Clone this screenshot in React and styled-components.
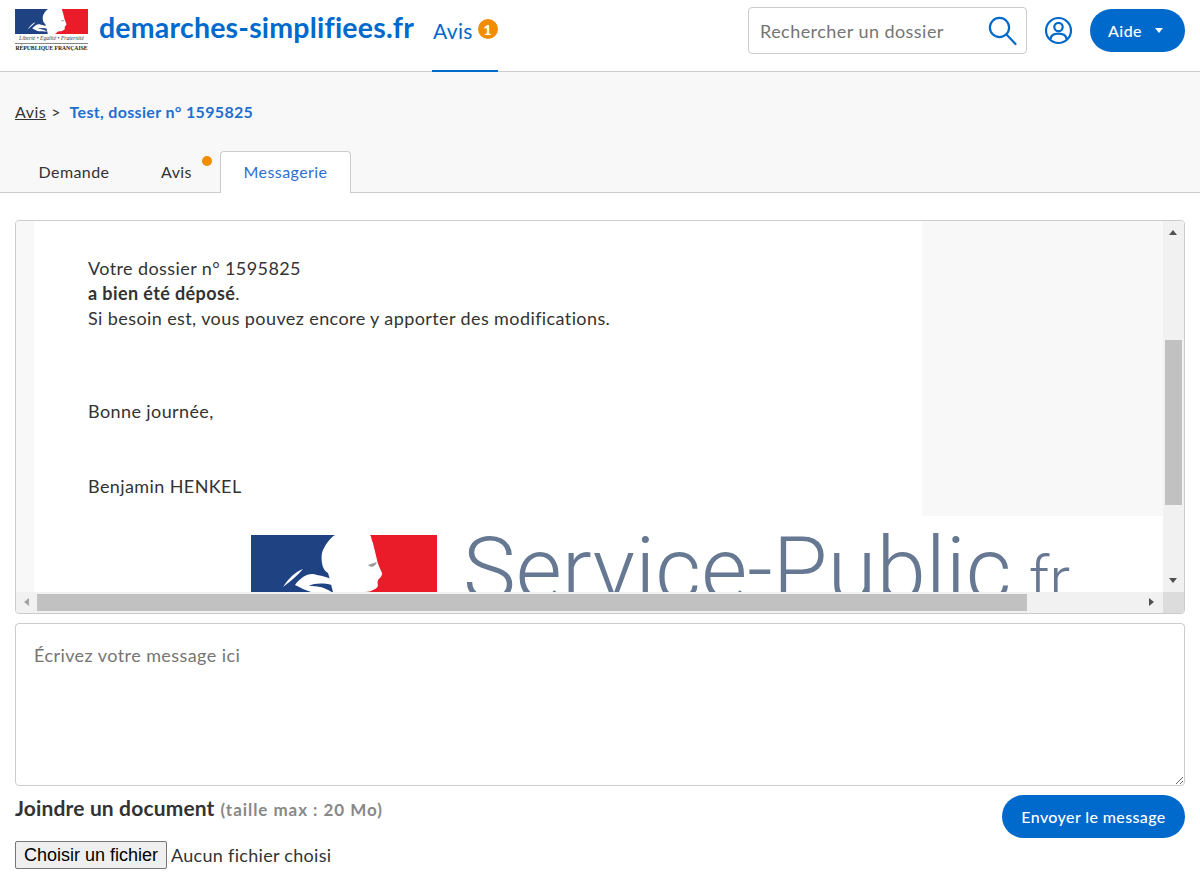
import React from "react";
import styled, { createGlobalStyle } from "styled-components";

const GlobalStyle = createGlobalStyle`
  html, body {
    margin: 0;
    padding: 0;
    background: #fff;
    font-family: "Lato", "Noto Sans", sans-serif;
    color: #333;
  }
  * {
    box-sizing: border-box;
  }
`;

const Header = styled.header`
  height: 72px;
  padding: 0 15px;
  display: flex;
  align-items: center;
  justify-content: space-between;
  border-bottom: 1px solid #ccc;
  background: #fff;
`;

const HeaderLeft = styled.div`
  display: flex;
  align-items: center;
  height: 100%;
`;

const HeaderRight = styled.div`
  display: flex;
  align-items: center;
  margin-top: -10px;
`;

const Logo = styled.div`
  width: 73px;
  margin-top: -10px;
  display: flex;
  flex-direction: column;
`;

const Devise = styled.div`
  font-family: "Liberation Serif", serif;
  font-style: italic;
  font-size: 5.6px;
  line-height: 8px;
  white-space: nowrap;
  text-align: center;
  color: #333;
  border-bottom: 1px solid #888;
  padding-bottom: 1px;
`;

const Republique = styled.div`
  font-family: "Liberation Serif", serif;
  font-weight: bold;
  font-size: 5.7px;
  line-height: 8px;
  white-space: nowrap;
  text-align: center;
  color: #222;
`;

const Title = styled.div`
  margin-left: 11px;
  margin-top: -18px;
  font-size: 28.5px;
  font-weight: 700;
  color: #0069cc;
  white-space: nowrap;
  letter-spacing: 0.2px;
`;

const NavItem = styled.div`
  margin-left: 18px;
  width: 66px;
  height: 100%;
  display: flex;
  align-items: center;
  gap: 5px;
  padding: 0 0 10px 1px;
  font-size: 21px;
  color: #0069cc;
  border-bottom: 2px solid #0069cc;
  margin-bottom: -1px;
  letter-spacing: 0.3px;
`;

const Badge = styled.span`
  width: 20px;
  height: 20px;
  border-radius: 50%;
  background: #f28c00;
  color: #fff;
  font-size: 14px;
  font-weight: 900;
  letter-spacing: 0;
  display: flex;
  align-items: center;
  justify-content: center;
  margin-top: -2px;
`;

const SearchBox = styled.div`
  width: 279px;
  height: 47px;
  border: 1px solid #ccc;
  border-radius: 4px;
  display: flex;
  align-items: center;
  justify-content: space-between;
  padding: 0 9px 0 11px;
  font-size: 18px;
  color: #757575;
  letter-spacing: 0.45px;
`;

const UserButton = styled.div`
  margin-left: 17px;
  width: 29px;
  height: 29px;
  display: flex;
`;

const PillButton = styled.div`
  height: 43px;
  border-radius: 22px;
  background: #0069cc;
  color: #fff;
  display: flex;
  align-items: center;
  justify-content: center;
  font-size: 16px;
  font-weight: 500;
  white-space: nowrap;
  letter-spacing: 0.4px;
`;

const AideButton = styled(PillButton)`
  width: 95px;
  margin-left: 17px;
  gap: 13px;
  padding-right: 4px;
`;

const Caret = styled.span`
  width: 0;
  height: 0;
  border-left: 4px solid transparent;
  border-right: 4px solid transparent;
  border-top: 5px solid #fff;
`;

const SubHeader = styled.section`
  height: 121px;
  background: #f8f8f8;
  border-bottom: 1px solid #ccc;
  padding: 0 15px;
  display: flex;
  flex-direction: column;
  justify-content: space-between;
`;

const Breadcrumb = styled.div`
  margin-top: 29px;
  display: flex;
  align-items: baseline;
  font-size: 16px;
  line-height: 22px;
`;

const CrumbLink = styled.span`
  text-decoration: underline;
  letter-spacing: 0.5px;
  color: #333;
`;

const CrumbSep = styled.span`
  margin: 0 9px 0 5px;
`;

const CrumbCurrent = styled.span`
  font-weight: 700;
  color: #1f6fd0;
  letter-spacing: 0.33px;
`;

const Tabs = styled.nav`
  display: flex;
  height: 42px;
  margin-bottom: -1px;
`;

const Tab = styled.div`
  position: relative;
  height: 42px;
  display: flex;
  align-items: center;
  justify-content: center;
  width: ${(p) => p.$width}px;
  font-size: 16px;
  letter-spacing: 0.42px;
  padding-bottom: 3px;
  color: ${(p) => (p.$active ? "#2d6fcf" : "#333")};
  background: ${(p) => (p.$active ? "#fff" : "transparent")};
  border: 1px solid ${(p) => (p.$active ? "#ccc" : "transparent")};
  border-bottom: 0;
  border-radius: 4px 4px 0 0;
`;

const TabDot = styled.span`
  position: absolute;
  top: 4px;
  right: 7px;
  width: 10px;
  height: 10px;
  border-radius: 50%;
  background: #f28c00;
`;

const Main = styled.main`
  padding: 27px 15px 0;
`;

const MailPanel = styled.div`
  height: 394px;
  border: 1px solid #ccc;
  border-radius: 4px;
  display: grid;
  grid-template-columns: 1fr 21px;
  grid-template-rows: 1fr 21px;
  overflow: hidden;
`;

const MailViewport = styled.div`
  display: flex;
  overflow: hidden;
  min-width: 0;
  min-height: 0;
  background: #f8f8f8;
`;

const MailGutter = styled.div`
  flex: none;
  width: 18px;
`;

const MailPage = styled.div`
  flex: 1;
  min-width: 0;
  display: flex;
  flex-direction: column;
`;

const MailTop = styled.div`
  flex: none;
  display: flex;
  height: 295px;
  background: #f8f8f8;
`;

const MailBody = styled.div`
  width: 888px;
  background: #fff;
  padding: 35px 54px 0;
  font-size: 18px;
  line-height: 25px;
  color: #333;
  letter-spacing: 0.4px;
`;

const MailLine = styled.div`
  margin-bottom: ${(p) => p.$after || 0}px;
  white-space: nowrap;
`;

const Banner = styled.div`
  flex: none;
  display: flex;
  align-items: flex-start;
  background: #fff;
  padding: 19px 0 0 217px;
  height: 90px;
`;

const BannerFlag = styled.div`
  width: 186px;
  flex: none;
`;

const BannerName = styled.div`
  font-family: "Roboto", sans-serif;
  font-weight: 300;
  font-size: 89px;
  line-height: 80px;
  color: #667892;
  margin-left: 26px;
  margin-top: -5px;
  white-space: nowrap;
  flex: none;
`;

const BannerTld = styled.span`
  font-size: 62px;
  margin-left: 17px;
`;

const ScrollV = styled.div`
  position: relative;
  background: #f1f1f1;
  padding: ${(p) => p.$start}px 2px 0;
`;

const ScrollH = styled.div`
  position: relative;
  background: #f1f1f1;
  padding: 2px 0 2px ${(p) => p.$start}px;
`;

const Thumb = styled.div`
  background: #c1c1c1;
  width: ${(p) => (p.$size && p.$horizontal ? `${p.$size}px` : "100%")};
  height: ${(p) => (p.$size && !p.$horizontal ? `${p.$size}px` : "100%")};
`;

const Arrow = styled.span`
  position: absolute;
  width: 0;
  height: 0;
  ${(p) => p.$dir === "up" && `top: 9px; left: 6px; border-left: 4.5px solid transparent; border-right: 4.5px solid transparent; border-bottom: 5px solid #505050;`}
  ${(p) => p.$dir === "down" && `bottom: 9px; left: 6px; border-left: 4.5px solid transparent; border-right: 4.5px solid transparent; border-top: 5px solid #505050;`}
  ${(p) => p.$dir === "left" && `left: 8px; top: 6px; border-top: 4.5px solid transparent; border-bottom: 4.5px solid transparent; border-right: 5px solid #a3a3a3;`}
  ${(p) => p.$dir === "right" && `right: 9px; top: 6px; border-top: 4.5px solid transparent; border-bottom: 4.5px solid transparent; border-left: 5px solid #505050;`}
`;

const ScrollCorner = styled.div`
  background: #dcdcdc;
`;

const MessageBox = styled.textarea`
  display: block;
  width: 100%;
  height: 163px;
  margin: 9px 0 0;
  padding: 20px 18px;
  border: 1px solid #ccc;
  border-radius: 4px;
  font-family: inherit;
  font-size: 18px;
  letter-spacing: 0.43px;
  outline: none;
  &::placeholder {
    color: #757575;
    opacity: 1;
  }
`;

const Footer = styled.div`
  display: flex;
  justify-content: space-between;
  align-items: flex-start;
`;

const AttachColumn = styled.div`
  display: flex;
  flex-direction: column;
`;

const AttachLabel = styled.div`
  margin-top: 8px;
  font-size: 21px;
  line-height: 28px;
  font-weight: 700;
  color: #333;
  letter-spacing: 0.15px;
`;

const AttachHint = styled.span`
  font-size: 17px;
  color: #888;
  margin-left: 6px;
  letter-spacing: 0.95px;
`;

const FileRow = styled.div`
  display: flex;
  align-items: center;
  margin-top: 17px;
`;

const FileButton = styled.button`
  width: 152px;
  height: 28px;
  padding: 0;
  font-family: "Liberation Sans", Arial, sans-serif;
  font-size: 18px;
  color: #000;
  background: #efefef;
  border: 1px solid #767676;
  border-radius: 2px;
`;

const FileName = styled.span`
  margin-left: 4px;
  font-size: 18px;
  color: #333;
  letter-spacing: 0.3px;
`;

const SendButton = styled(PillButton)`
  width: 183px;
  margin-top: 9px;
  letter-spacing: 0.38px;
`;

// Marianne drawn once, the header and the mail banner share it
const Marianne = () => (
  <svg viewBox="0 0 186 65" width="100%" style={{ display: "block" }}>
    <rect width="93" height="65" fill="#1f4282" />
    <rect x="93" width="93" height="65" fill="#ea1c29" />
    <path
      d="M84 0 C79 3 73 11 71 18 C70 24 71 29 72 32 C73 35 75 37 77 38 C79 44 80 50 82 57 L84 65 L100 65 L111 57 C115 57 119 57 122 55 C125 54 127 52 127 50 C126 48 127 46 127 45 C129 43 132 40 131 38 C129 34 127 29 126 25 C125 20 123 13 122 8 C120 5 121 2 119 0 Z"
      fill="#fff"
    />
    <path
      d="M32 52 C38 43 44 37 52 34 C47 40 40 46 32 52 Z M44 50 C50 42 58 37 66 40 C72 41 76 42 80 44 L81 50 C72 48 64 48 58 51 C66 51 74 52 82 58 C74 57 66 57 60 57 C54 55 50 53 44 50 Z"
      fill="#fff"
    />
    <path d="M117 30 L126 27 C124 32 120 33 117 30 Z" fill="#999" />
  </svg>
);

const App = () => {
  return (
    <>
      <GlobalStyle />
      <Header>
        <HeaderLeft>
          <Logo>
            <Marianne />
            <Devise>Liberté • Égalité • Fraternité</Devise>
            <Republique>RÉPUBLIQUE FRANÇAISE</Republique>
          </Logo>
          <Title>demarches-simplifiees.fr</Title>
          <NavItem>
            Avis
            <Badge>1</Badge>
          </NavItem>
        </HeaderLeft>
        <HeaderRight>
          <SearchBox>
            Rechercher un dossier
            <svg width="29" height="30" viewBox="0 0 29 30" fill="none" stroke="#0069cc" strokeWidth="2.2">
              <circle cx="11.5" cy="11.5" r="9.6" />
              <path d="M18.5 18.5 L27.5 28" strokeLinecap="round" />
            </svg>
          </SearchBox>
          <UserButton>
            <svg width="29" height="29" viewBox="0 0 29 29" fill="none" stroke="#0069cc" strokeWidth="2.2">
              <circle cx="14.5" cy="14.5" r="12.5" />
              <circle cx="14.5" cy="11" r="4.2" />
              <path d="M6.5 23 C7 19 10 17.6 14.5 17.6 C19 17.6 22 19 22.5 23" />
            </svg>
          </UserButton>
          <AideButton>
            Aide
            <Caret />
          </AideButton>
        </HeaderRight>
      </Header>

      <SubHeader>
        <Breadcrumb>
          <CrumbLink>Avis</CrumbLink>
          <CrumbSep>&gt;</CrumbSep>
          <CrumbCurrent>Test, dossier n° 1595825</CrumbCurrent>
        </Breadcrumb>
        <Tabs>
          <Tab $width={118}>Demande</Tab>
          <Tab $width={87}>
            Avis
            <TabDot />
          </Tab>
          <Tab $width={131} $active>
            Messagerie
          </Tab>
        </Tabs>
      </SubHeader>

      <Main>
        <MailPanel>
          <MailViewport>
            <MailGutter />
            <MailPage>
              <MailTop>
                <MailBody>
                  <MailLine>Votre dossier n° 1595825</MailLine>
                  <MailLine>
                    <b>a bien été déposé</b>.
                  </MailLine>
                  <MailLine $after={68}>
                    Si besoin est, vous pouvez encore y apporter des modifications.
                  </MailLine>
                  <MailLine $after={50}>Bonne journée,</MailLine>
                  <MailLine>Benjamin HENKEL</MailLine>
                </MailBody>
              </MailTop>
              <Banner>
                <BannerFlag>
                  <Marianne />
                </BannerFlag>
                <BannerName>
                  Service-Public
                  <BannerTld>fr</BannerTld>
                </BannerName>
              </Banner>
            </MailPage>
          </MailViewport>
          <ScrollV $start={119}>
            <Arrow $dir="up" />
            <Thumb $size={165} />
            <Arrow $dir="down" />
          </ScrollV>
          <ScrollH $start={21}>
            <Arrow $dir="left" />
            <Thumb $horizontal $size={990} />
            <Arrow $dir="right" />
          </ScrollH>
          <ScrollCorner />
        </MailPanel>

        <MessageBox placeholder="Écrivez votre message ici" />

        <Footer>
          <AttachColumn>
            <AttachLabel>
              Joindre un document
              <AttachHint>(taille max : 20 Mo)</AttachHint>
            </AttachLabel>
            <FileRow>
              <FileButton type="button">Choisir un fichier</FileButton>
              <FileName>Aucun fichier choisi</FileName>
            </FileRow>
          </AttachColumn>
          <SendButton>Envoyer le message</SendButton>
        </Footer>
      </Main>
    </>
  );
};

export default App;
